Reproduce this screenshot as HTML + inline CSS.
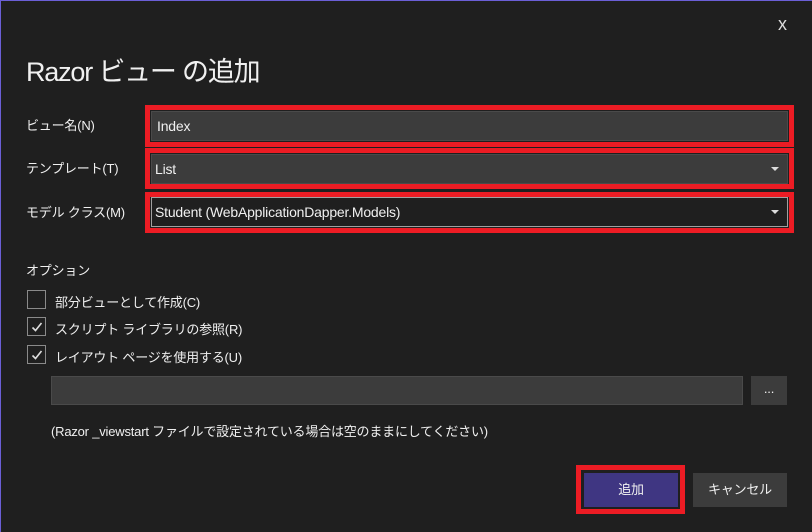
<!DOCTYPE html>
<html><head><meta charset="utf-8"><style>
*{margin:0;padding:0;box-sizing:border-box}
body{width:812px;height:532px;background:#1f1f1f;overflow:hidden;font-family:"Liberation Sans","Noto Sans CJK JP",sans-serif;color:#f0f0f0;position:relative;font-size:13px;letter-spacing:-0.2px}
.frame{position:absolute;left:0;top:0;width:812px;height:532px;border-top:1px solid #6b5fd6;border-left:1px solid #6b5fd6}
.a{position:absolute;white-space:nowrap}
.red{position:absolute;border:5px solid #ec1c24}
.fld{position:absolute;background:#3c3c3c;border:1px solid #4a4a4a;padding-left:4px;line-height:28px;font-size:14px}
.arr{position:absolute;right:8px;top:12px;width:0;height:0;border-left:4px solid transparent;border-right:4px solid transparent;border-top:4px solid #ddd}
.cb{position:absolute;left:27px;width:19px;height:19px;border:1px solid #8a8a8a}
.cb svg{position:absolute;left:3px;top:3px}
</style></head><body>
<div class="frame"></div>
<div class="a" style="left:778px;top:14px;font-size:18px;color:#ddd">x</div>
<div class="a" style="left:26px;top:50px;font-size:27px;color:#f0f0f0;letter-spacing:-1.2px">Razor ビュー の追加</div>

<div class="a" style="left:26px;top:115px">ビュー名(N)</div>
<div class="a" style="left:26px;top:158px">テンプレート(T)</div>
<div class="a" style="left:26px;top:202px">モデル クラス(M)</div>

<div class="red" style="left:145px;top:105px;width:649px;height:42px"></div>
<div class="fld" style="left:151px;top:111px;width:637px;height:30px;padding-left:5px">Index</div>
<div class="red" style="left:145px;top:148px;width:649px;height:41px"></div>
<div class="fld" style="left:151px;top:154px;width:637px;height:30px;padding-left:3px">List<div class="arr"></div></div>
<div class="red" style="left:145px;top:192px;width:649px;height:41px"></div>
<div class="fld" style="left:151px;top:197px;width:637px;height:30px;background:#1f1f1f;border-color:#a0a0a0;padding-left:3px">Student (WebApplicationDapper.Models)<div class="arr"></div></div>

<div class="a" style="left:26px;top:260px">オプション</div>
<div class="cb" style="top:290px"></div>
<div class="a" style="left:55px;top:292px">部分ビューとして作成(C)</div>
<div class="cb" style="top:317px"><svg width="12" height="12" viewBox="0 0 12 12"><path d="M1.5 6.5 L4.5 9.5 L10.5 2" stroke="#ddd" stroke-width="1.6" fill="none"/></svg></div>
<div class="a" style="left:55px;top:319px">スクリプト ライブラリの参照(R)</div>
<div class="cb" style="top:345px"><svg width="12" height="12" viewBox="0 0 12 12"><path d="M1.5 6.5 L4.5 9.5 L10.5 2" stroke="#ddd" stroke-width="1.6" fill="none"/></svg></div>
<div class="a" style="left:55px;top:347px">レイアウト ページを使用する(U)</div>

<div class="a" style="left:51px;top:376px;width:692px;height:29px;background:#3c3c3c;border:1px solid #4a4a4a"></div>
<div class="a" style="left:751px;top:376px;width:36px;height:29px;background:#3c3c3c;text-align:center;line-height:26px;font-size:13px">...</div>
<div class="a" style="left:51px;top:421px">(Razor _viewstart ファイルで設定されている場合は空のままにしてください)</div>

<div class="red" style="left:576px;top:465px;width:109px;height:49px"></div>
<div class="a" style="left:584px;top:473px;width:94px;height:34px;background:#3f3682;text-align:center;line-height:34px">追加</div>
<div class="a" style="left:693px;top:473px;width:94px;height:34px;background:#3c3c3c;text-align:center;line-height:34px">キャンセル</div>
</body></html>
